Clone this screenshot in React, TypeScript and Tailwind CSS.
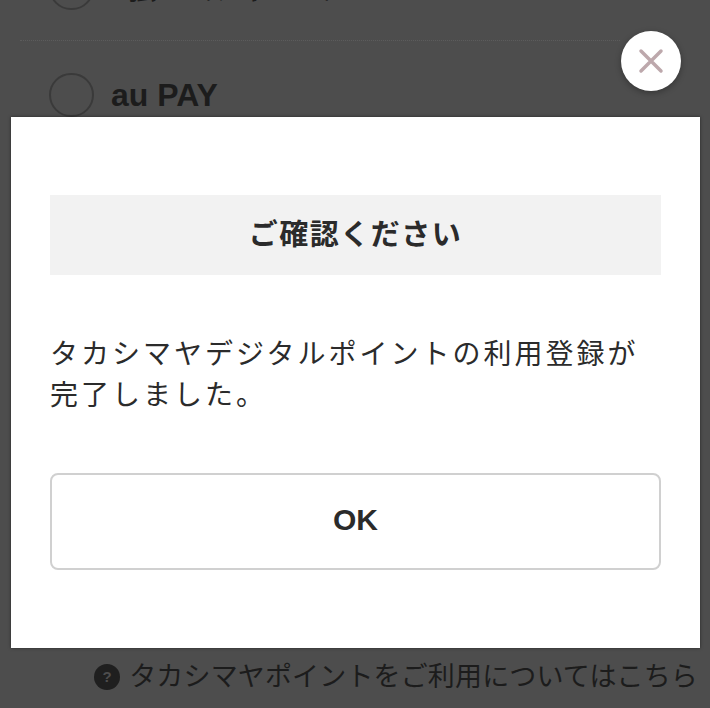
const FONT = "font-['Liberation_Sans','Noto_Sans_CJK_JP',sans-serif]";

export default function App() {
  return (
    <div className={`relative h-[708px] w-[710px] overflow-hidden bg-[#4d4d4d] ${FONT}`}>
      {/* list behind the overlay */}
      <div className="flex h-[648px] flex-col pl-[49px]">
        <div className="flex h-[40px] items-end">
          <div className="mb-[30px] h-[44px] w-[45px] shrink-0 rounded-full border-2 border-[#3a3a3a]" />
          <span className="mb-[32px] ml-[17px] text-[28px] leading-[36px] font-bold whitespace-nowrap text-[#1c1c1c]">d払い（チャージ）</span>
        </div>
        <div className="ml-[-29px] w-[600px] border-t border-dotted border-[#5c5c5c]" />
        <div className="mt-[31px] flex items-center">
          <div className="h-[44px] w-[45px] shrink-0 rounded-full border-2 border-[#3a3a3a]" />
          <span className="ml-[17px] text-[32px] font-bold leading-[46px] text-[#1c1c1c]">au PAY</span>
        </div>
      </div>

      <div className="mt-[11px] flex items-center justify-end pr-[12px]">
        <div className="flex h-[26px] w-[26px] items-center justify-center rounded-full bg-[#1f1f1f] text-[15px] font-bold text-[#4d4d4d]">?</div>
        <span className="ml-[9px] text-[27px] leading-[36px] tracking-[0.15px] whitespace-nowrap text-[#1c1c1c]">タカシマヤポイントをご利用についてはこちら</span>
      </div>

      {/* close button */}
      <button className="absolute top-[31px] left-[621px] flex h-[60px] w-[60px] items-center justify-center rounded-full bg-white shadow-[0_2px_6px_rgba(0,0,0,0.3)]">
        <svg width="28" height="28" viewBox="0 0 28 28" fill="none" stroke="#bda8ac" strokeWidth="3.5" strokeLinecap="round">
          <path d="M4 4 24 24M24 4 4 24" />
        </svg>
      </button>

      {/* dialog */}
      <div className="absolute top-[117px] left-[11px] flex h-[531px] w-[689px] flex-col bg-white px-[39px] pt-[78px] shadow-[0_0_3px_rgba(0,0,0,0.5)]">
        <div className="flex h-[80px] items-center justify-center bg-[#f2f2f2] pt-[2px] text-[29px] font-bold tracking-[1.5px] text-[#2b2b2b]">
          ご確認ください
        </div>
        <p className="mt-[59px] text-[28px] leading-[41px] tracking-[3px] text-[#2b2b2b]">
          タカシマヤデジタルポイントの利用登録が完了しました。
        </p>
        <button className="mt-[57px] flex h-[97px] items-center justify-center rounded-[8px] border-2 border-[#d0d0d0] pb-[5px] text-[30px] font-bold text-[#2b2b2b]">
          OK
        </button>
      </div>
    </div>
  );
}
